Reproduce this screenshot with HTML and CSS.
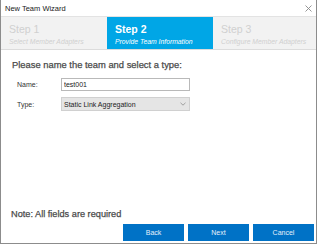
FILE: index.html
```html
<!DOCTYPE html>
<html lang="en">
<head>
    <meta charset="UTF-8">
    <title>New Team Wizard</title>
    <link rel="stylesheet" href="styles.css">
</head>
<body>
    <div class="window">
        <!-- Title Bar -->
        <div class="titlebar">
            <span class="title">New Team Wizard</span>
            <svg class="close" width="7" height="7" viewBox="0 0 7 7">
                <path d="M0.5 0.5 L6.5 6.5 M6.5 0.5 L0.5 6.5" stroke="#8a8a8a" stroke-width="0.9" fill="none"/>
            </svg>
        </div>

        <!-- Wizard Steps -->
        <div class="steps">
            <div class="step step-one">
                <div class="step-name">Step 1</div>
                <div class="step-desc">Select Member Adapters</div>
            </div>
            <div class="step step-two active">
                <div class="step-name">Step 2</div>
                <div class="step-desc">Provide Team Information</div>
            </div>
            <div class="step step-three">
                <div class="step-name">Step 3</div>
                <div class="step-desc">Configure Member Adapters</div>
            </div>
        </div>

        <!-- Form Content -->
        <div class="content">
            <h1>Please name the team and select a type:</h1>
            <div class="form-row">
                <label for="team_name">Name:</label>
                <input type="text" id="team_name" value="test001">
            </div>
            <div class="form-row">
                <label for="team_type">Type:</label>
                <div class="select">
                    <span>Static Link Aggregation</span>
                    <svg width="6" height="4" viewBox="0 0 6 4">
                        <path d="M0.5 0.8 L3 3.2 L5.5 0.8" stroke="#8c8c8c" stroke-width="0.8" fill="none"/>
                    </svg>
                </div>
            </div>

            <p class="note">Note: All fields are required</p>
        </div>

        <!-- Button Group -->
        <div class="button-group">
            <button class="button">Back</button>
            <button class="button">Next</button>
            <button class="button">Cancel</button>
        </div>
    </div>
</body>
</html>
```

FILE: styles.css
```css
/* Basic Reset */
* {
    margin: 0;
    padding: 0;
    box-sizing: border-box;
    font-family: 'Liberation Sans', Arial, sans-serif;
}

body {
    background-color: #ffffff;
    width: 320px;
    height: 245px;
}

/* Window Frame */
.window {
    width: 317px;
    height: 244px;
    border: 1px solid #8c8c8c;
    border-top: none;
    display: flex;
    flex-direction: column;
    background-color: #ffffff;
}

.titlebar {
    height: 16px;
    display: flex;
    align-items: center;
    justify-content: space-between;
    padding: 0 4px 0 4px;
}
.title {
    font-size: 7.5px;
    color: #1a1a1a;
}

/* Steps Header */
.steps {
    display: flex;
    height: 34px;
    border-top: 1px solid #e3e3e3;
    border-bottom: 1px solid #dcdcdc;
}
.step {
    background-color: #f2f2f2;
    padding: 6px 0 0 8px;
    color: #d0d0d0;
}
.step-one {
    width: 106px;
}
.step-two {
    width: 106px;
}
.step-three {
    flex: 1;
}
.step-name {
    font-size: 10.5px;
    line-height: 13px;
}
.step-desc {
    font-size: 6.8px;
    font-style: italic;
    margin-top: 2px;
}
.step.active {
    background-color: #00a6e6;
    color: #ffffff;
}
.step.active .step-name {
    font-weight: bold;
}

/* Form */
.content {
    flex: 1;
    display: flex;
    flex-direction: column;
    padding: 9px 0 0 11px;
}
.content h1 {
    font-size: 9.4px;
    font-weight: normal;
    color: #4a4a4a;
    -webkit-text-stroke: 0.25px #4a4a4a;
    margin-bottom: 8px;
}
.form-row {
    display: flex;
    align-items: center;
    margin-bottom: 6px;
    padding-left: 5px;
}
.form-row label {
    width: 44px;
    font-size: 7px;
    color: #333;
}
.form-row input,
.select {
    width: 129px;
    height: 13px;
    border: 1px solid #b9b9b9;
    font-size: 7px;
    padding: 0 2px;
    color: #222;
    background-color: #ffffff;
}
.select {
    height: 14px;
    display: flex;
    align-items: center;
    justify-content: space-between;
    background-color: #e5e5e5;
    border-color: #d0d0d0;
    padding-right: 3px;
}
.note {
    margin-top: auto;
    margin-bottom: 5px;
    margin-left: -1px;
    font-size: 9.2px;
    color: #4a4a4a;
    -webkit-text-stroke: 0.25px #4a4a4a;
}

/* Buttons */
.button-group {
    display: flex;
    justify-content: flex-end;
    gap: 4px;
    padding: 0 2px 2px 0;
}
.button {
    width: 61px;
    height: 17px;
    border: none;
    background-color: #0072c6;
    color: #e6f0fa;
    font-size: 7px;
}
```
